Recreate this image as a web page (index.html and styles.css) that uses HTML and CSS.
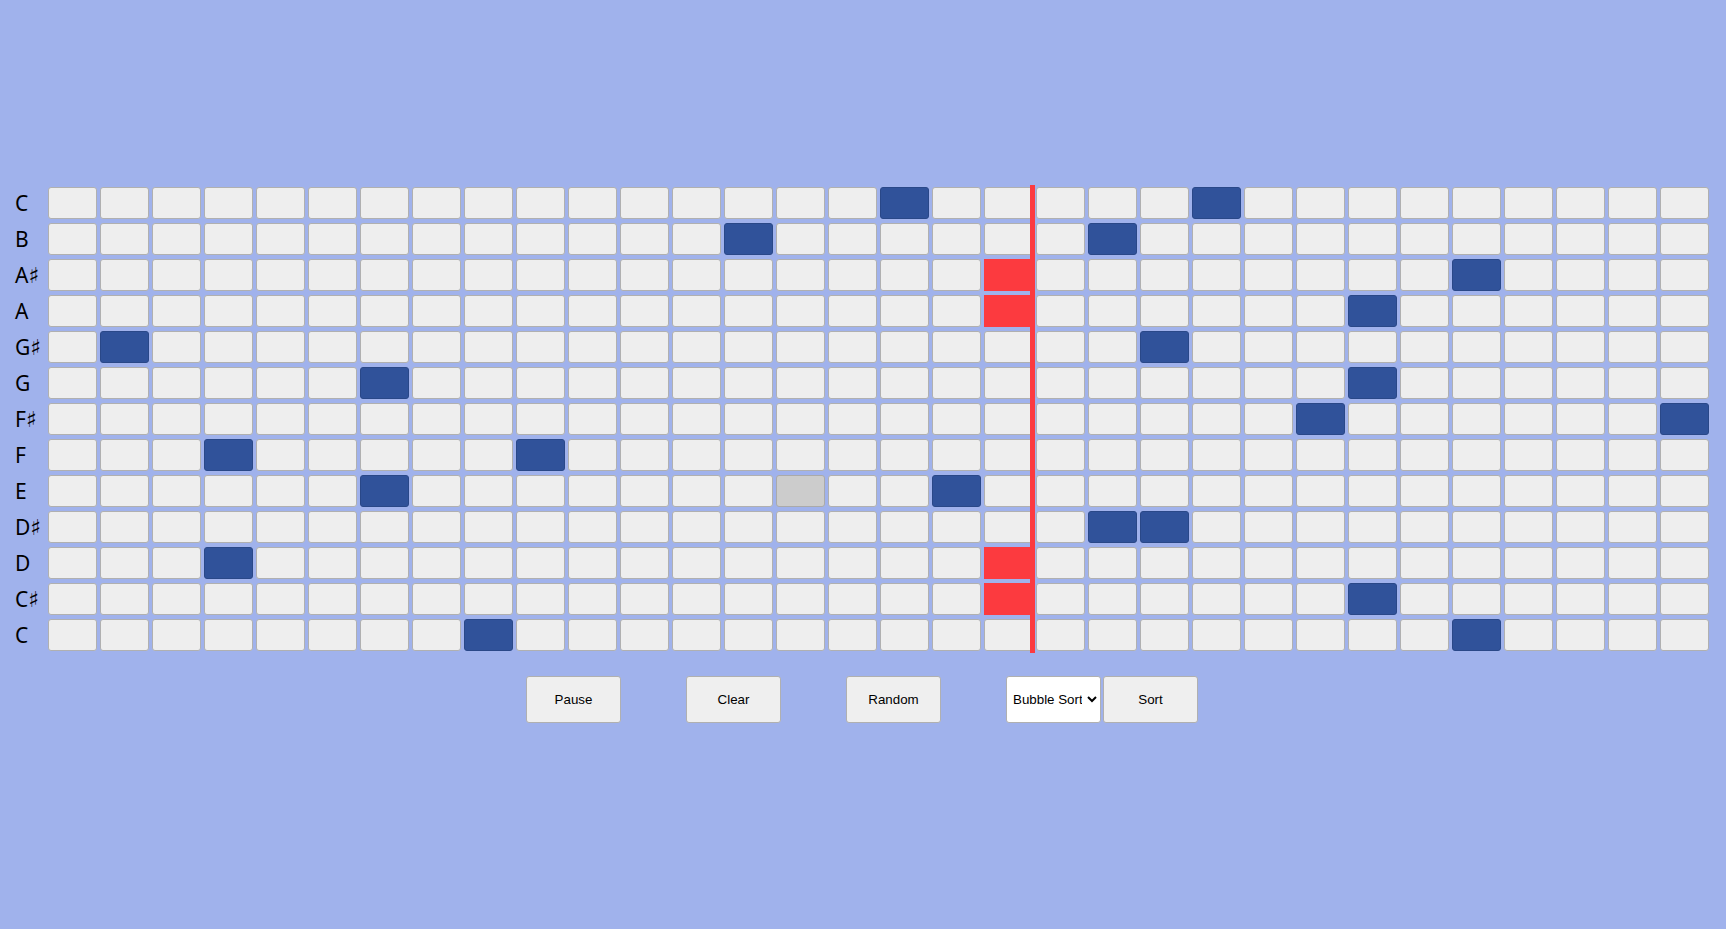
FILE: index.html
```html
<!DOCTYPE html>
<html lang="en">
<head>
    <meta charset="UTF-8">
    <meta name="viewport" content="width=device-width, initial-scale=1.0">
    <title>Sequencer</title>
    <link rel="stylesheet" href="styles.css">
</head>
<body>
    <div class="board">
        <div class="labels" id="labels"></div>
        <div class="grid" id="grid">
            <div class="playhead"></div>
        </div>
    </div>

    <div class="controls">
        <button class="btn">Pause</button>
        <button class="btn">Clear</button>
        <button class="btn">Random</button>
        <div class="sort-group">
            <select class="algo">
                <option>Bubble Sort</option>
                <option>Insertion Sort</option>
                <option>Selection Sort</option>
            </select>
            <button class="btn">Sort</button>
        </div>
    </div>

    <script>
        const notes = ["C", "B", "A♯", "A", "G♯", "G", "F♯", "F", "E", "D♯", "D", "C♯", "C"];
        const steps = 32;
        const playing = 18;

        // active steps for each row, top to bottom
        const pattern = [
            [16, 22],
            [13, 20],
            [18, 27],
            [18, 25],
            [1, 21],
            [6, 25],
            [24, 31],
            [3, 9],
            [6, 17],
            [20, 21],
            [3, 18],
            [18, 25],
            [8, 27]
        ];
        const hovered = { row: 8, col: 14 };

        const labels = document.getElementById("labels");
        const grid = document.getElementById("grid");

        notes.forEach((note, row) => {
            const label = document.createElement("div");
            label.className = "label";
            if (note.includes("♯")) {
                label.innerHTML = note[0] + '<span class="sharp">♯</span>';
            } else {
                label.textContent = note;
            }
            labels.appendChild(label);

            for (let col = 0; col < steps; col++) {
                const cell = document.createElement("div");
                cell.className = "cell";
                if (pattern[row].includes(col)) {
                    cell.classList.add(col === playing ? "playing" : "on");
                } else if (row === hovered.row && col === hovered.col) {
                    cell.classList.add("hover");
                }
                grid.appendChild(cell);
            }
        });
    </script>
</body>
</html>
```

FILE: styles.css
```css
body {
    margin: 0;
    padding: 185px 0 0 0;
    background-color: #a0b2ec;
    font-family: "Noto Sans", "Open Sans", sans-serif;
    height: 929px;
    box-sizing: border-box;
}
.board {
    display: flex;
}
.labels {
    width: 46px;
    display: flex;
    flex-direction: column;
}
.label {
    height: 36px;
    line-height: 36px;
    padding-left: 15px;
    font-size: 21px;
    color: #000;
}
.sharp {
    font-family: "DejaVu Sans", sans-serif;
    font-size: 22px;
}
.grid {
    position: relative;
    display: grid;
    grid-template-columns: repeat(32, 52px);
    grid-auto-rows: 36px;
}
.cell {
    margin: 2px 1px 2px 2px;
    box-sizing: border-box;
    background: #eeeeee;
    border: 1px solid #b0b0b0;
    border-radius: 3px;
}
.cell.on {
    background: #30529a;
    border-color: #2a4888;
}
.cell.playing {
    background: #fc3a3f;
    border-color: #fc3a3f;
    border-radius: 0;
    margin-right: 4px;
}
.cell.hover {
    background: #cccccc;
    border-color: #aaaaaa;
}
.playhead {
    position: absolute;
    top: 0;
    bottom: 0;
    left: 984px;
    width: 5px;
    background: #fc3a3f;
}
.controls {
    display: flex;
    justify-content: center;
    gap: 65px;
    margin-top: 23px;
    padding-right: 2px;
}
.sort-group {
    display: flex;
    gap: 2px;
}
.btn, .algo {
    width: 95px;
    height: 47px;
    box-sizing: border-box;
    font-family: "Liberation Sans", Arial, sans-serif;
    font-size: 13.33px;
    color: #000;
    border: 1px solid #b0b0b0;
    border-radius: 3px;
}
.btn {
    background-color: #efefef;
    cursor: pointer;
}
.btn:hover {
    background-color: #e5e5e5;
}
.algo {
    background-color: #fff;
    padding: 0 2px;
}
```
